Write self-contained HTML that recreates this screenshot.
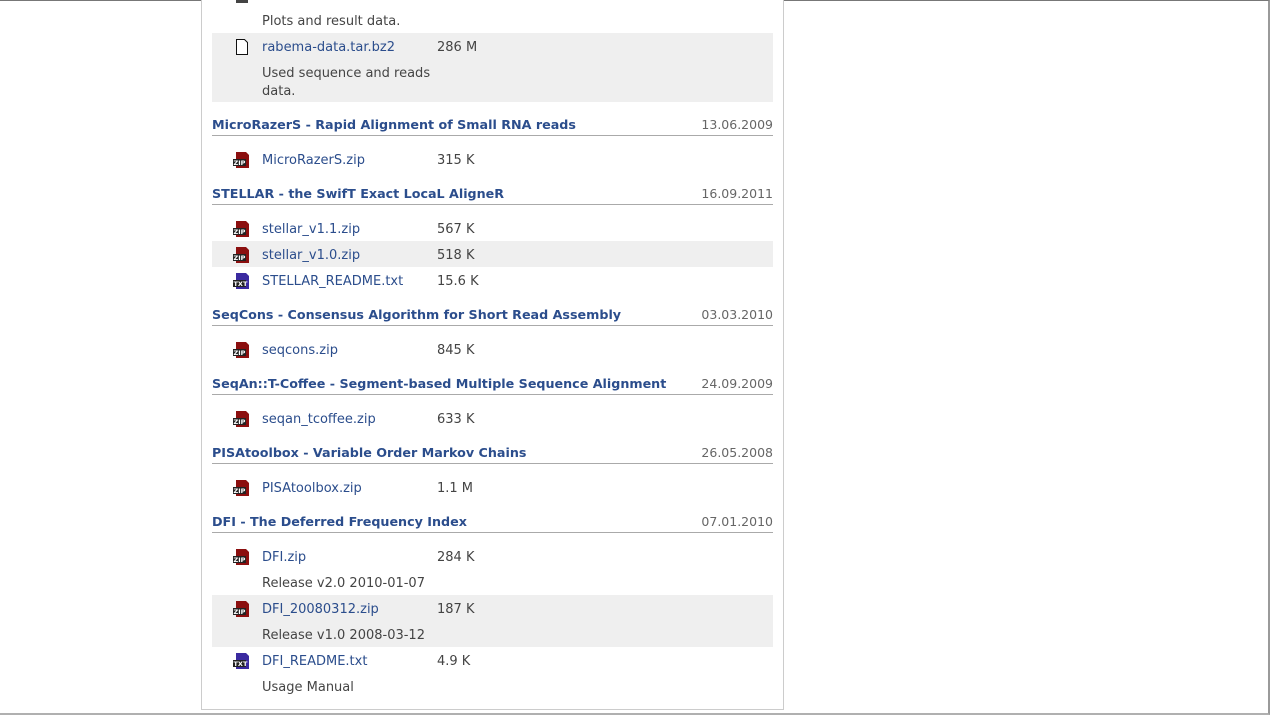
<!DOCTYPE html>
<html><head><meta charset="utf-8"><style>
body{margin:0;width:1271px;height:716px;background:#fff;position:relative;overflow:hidden;font-family:"DejaVu Sans","Liberation Sans",sans-serif;font-size:13px;color:#444}
.frame{position:absolute;left:-2px;top:0;width:1272px;height:715px;border-right:2px solid #9a9a9a;border-bottom:2px solid #b0b0b0;border-top:1px solid #777;box-sizing:border-box}
.panel{position:absolute;left:201px;top:-2px;width:583px;height:712px;border:1px solid #ccc;box-sizing:border-box;background:#fff}
.a{position:absolute;line-height:16px;white-space:nowrap;margin-top:2px}
.l{color:#2b4d8c}
.h{position:absolute;left:212px;width:561px;font-weight:bold;font-size:12.7px;color:#2b4d8c;border-bottom:1px solid #aaa;height:20px;line-height:16px}
.h span{position:absolute;right:0;top:2px;font-weight:normal;font-size:12.5px;color:#666}
.h b{position:relative;top:2px}
.g{position:absolute;left:212px;width:561px;background:#efefef}
.ic{position:absolute;left:233px;width:17px;height:16px;margin-top:1px}
</style></head><body>
<div class="frame"></div>
<div class="panel"></div>
<div class="g" style="top:33px;height:69px"></div>
<div class="g" style="top:241px;height:26px"></div>
<div class="g" style="top:595px;height:52px"></div>
<div style="position:absolute;left:236px;top:0;width:12px;height:3px;background:#444"></div>
<div class="a" style="left:262px;top:12px">Plots and result data.</div>
<svg class="ic" style="top:38px" viewBox="0 0 17 16"><path d="M3.5 0.5h8l3 3v12h-11z" fill="#fff" stroke="#111"/></svg>
<div class="a l" style="left:262px;top:38px">rabema-data.tar.bz2</div><div class="a" style="left:437px;top:38px">286 M</div>
<div class="a" style="left:262px;top:64px">Used sequence and reads</div>
<div class="a" style="left:262px;top:82px">data.</div>

<div class="h" style="top:115px"><b>MicroRazerS - Rapid Alignment of Small RNA reads</b><span>13.06.2009</span></div>
<div class="h" style="top:184px"><b>STELLAR - the SwifT Exact LocaL AligneR</b><span>16.09.2011</span></div>
<div class="h" style="top:305px"><b>SeqCons - Consensus Algorithm for Short Read Assembly</b><span>03.03.2010</span></div>
<div class="h" style="top:374px"><b>SeqAn::T-Coffee - Segment-based Multiple Sequence Alignment</b><span>24.09.2009</span></div>
<div class="h" style="top:443px"><b>PISAtoolbox - Variable Order Markov Chains</b><span>26.05.2008</span></div>
<div class="h" style="top:512px"><b>DFI - The Deferred Frequency Index</b><span>07.01.2010</span></div>

<svg class="ic" style="top:151px" viewBox="0 0 17 16"><path d="M3 0h10l3 3v13H3z" fill="#8b0f0f"/><rect x="0" y="7" width="13" height="7" fill="#222"/><text x="0.5" y="13" font-size="6.5" font-weight="bold" fill="#fff" font-family="DejaVu Sans">ZIP</text></svg>
<div class="a l" style="left:262px;top:151px">MicroRazerS.zip</div><div class="a" style="left:437px;top:151px">315 K</div>

<svg class="ic" style="top:220px" viewBox="0 0 17 16"><path d="M3 0h10l3 3v13H3z" fill="#8b0f0f"/><rect x="0" y="7" width="13" height="7" fill="#222"/><text x="0.5" y="13" font-size="6.5" font-weight="bold" fill="#fff" font-family="DejaVu Sans">ZIP</text></svg>
<div class="a l" style="left:262px;top:220px">stellar_v1.1.zip</div><div class="a" style="left:437px;top:220px">567 K</div>
<svg class="ic" style="top:246px" viewBox="0 0 17 16"><path d="M3 0h10l3 3v13H3z" fill="#8b0f0f"/><rect x="0" y="7" width="13" height="7" fill="#222"/><text x="0.5" y="13" font-size="6.5" font-weight="bold" fill="#fff" font-family="DejaVu Sans">ZIP</text></svg>
<div class="a l" style="left:262px;top:246px">stellar_v1.0.zip</div><div class="a" style="left:437px;top:246px">518 K</div>
<svg class="ic" style="top:272px" viewBox="0 0 17 16"><path d="M3 0h10l3 3v13H3z" fill="#3a2aa0"/><rect x="0" y="7" width="13" height="7" fill="#222"/><text x="0.5" y="13" font-size="6.5" font-weight="bold" fill="#fff" font-family="DejaVu Sans">TXT</text></svg>
<div class="a l" style="left:262px;top:272px">STELLAR_README.txt</div><div class="a" style="left:437px;top:272px">15.6 K</div>

<svg class="ic" style="top:341px" viewBox="0 0 17 16"><path d="M3 0h10l3 3v13H3z" fill="#8b0f0f"/><rect x="0" y="7" width="13" height="7" fill="#222"/><text x="0.5" y="13" font-size="6.5" font-weight="bold" fill="#fff" font-family="DejaVu Sans">ZIP</text></svg>
<div class="a l" style="left:262px;top:341px">seqcons.zip</div><div class="a" style="left:437px;top:341px">845 K</div>

<svg class="ic" style="top:410px" viewBox="0 0 17 16"><path d="M3 0h10l3 3v13H3z" fill="#8b0f0f"/><rect x="0" y="7" width="13" height="7" fill="#222"/><text x="0.5" y="13" font-size="6.5" font-weight="bold" fill="#fff" font-family="DejaVu Sans">ZIP</text></svg>
<div class="a l" style="left:262px;top:410px">seqan_tcoffee.zip</div><div class="a" style="left:437px;top:410px">633 K</div>

<svg class="ic" style="top:479px" viewBox="0 0 17 16"><path d="M3 0h10l3 3v13H3z" fill="#8b0f0f"/><rect x="0" y="7" width="13" height="7" fill="#222"/><text x="0.5" y="13" font-size="6.5" font-weight="bold" fill="#fff" font-family="DejaVu Sans">ZIP</text></svg>
<div class="a l" style="left:262px;top:479px">PISAtoolbox.zip</div><div class="a" style="left:437px;top:479px">1.1 M</div>

<svg class="ic" style="top:548px" viewBox="0 0 17 16"><path d="M3 0h10l3 3v13H3z" fill="#8b0f0f"/><rect x="0" y="7" width="13" height="7" fill="#222"/><text x="0.5" y="13" font-size="6.5" font-weight="bold" fill="#fff" font-family="DejaVu Sans">ZIP</text></svg>
<div class="a l" style="left:262px;top:548px">DFI.zip</div><div class="a" style="left:437px;top:548px">284 K</div>
<div class="a" style="left:262px;top:574px">Release v2.0 2010-01-07</div>
<svg class="ic" style="top:600px" viewBox="0 0 17 16"><path d="M3 0h10l3 3v13H3z" fill="#8b0f0f"/><rect x="0" y="7" width="13" height="7" fill="#222"/><text x="0.5" y="13" font-size="6.5" font-weight="bold" fill="#fff" font-family="DejaVu Sans">ZIP</text></svg>
<div class="a l" style="left:262px;top:600px">DFI_20080312.zip</div><div class="a" style="left:437px;top:600px">187 K</div>
<div class="a" style="left:262px;top:626px">Release v1.0 2008-03-12</div>
<svg class="ic" style="top:652px" viewBox="0 0 17 16"><path d="M3 0h10l3 3v13H3z" fill="#3a2aa0"/><rect x="0" y="7" width="13" height="7" fill="#222"/><text x="0.5" y="13" font-size="6.5" font-weight="bold" fill="#fff" font-family="DejaVu Sans">TXT</text></svg>
<div class="a l" style="left:262px;top:652px">DFI_README.txt</div><div class="a" style="left:437px;top:652px">4.9 K</div>
<div class="a" style="left:262px;top:678px">Usage Manual</div>
</body></html>
